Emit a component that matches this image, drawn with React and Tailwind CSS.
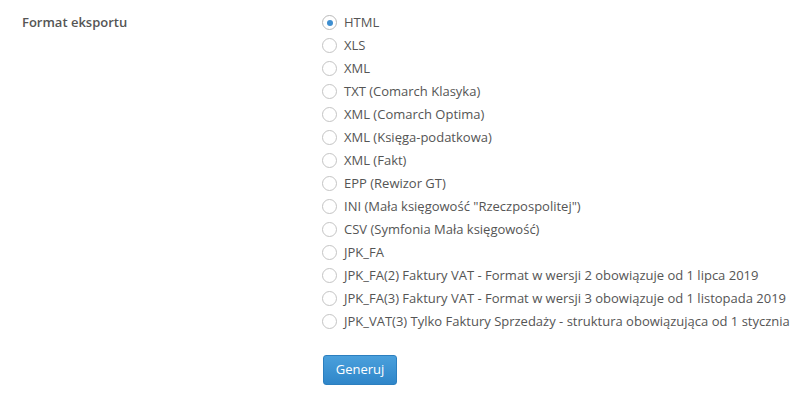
import React, { useState } from 'react'

const formats = [
  'HTML',
  'XLS',
  'XML',
  'TXT (Comarch Klasyka)',
  'XML (Comarch Optima)',
  'XML (Księga-podatkowa)',
  'XML (Fakt)',
  'EPP (Rewizor GT)',
  'INI (Mała księgowość "Rzeczpospolitej")',
  'CSV (Symfonia Mała księgowość)',
  'JPK_FA',
  'JPK_FA(2) Faktury VAT - Format w wersji 2 obowiązuje od 1 lipca 2019',
  'JPK_FA(3) Faktury VAT - Format w wersji 3 obowiązuje od 1 listopada 2019',
  'JPK_VAT(3) Tylko Faktury Sprzedaży - struktura obowiązująca od 1 stycznia 2020',
]

export default function App() {
  const [selected, setSelected] = useState(0)

  return (
    <div
      className="w-[792px] h-[396px] overflow-hidden bg-white text-[13px] text-[#555]"
      style={{ fontFamily: '"Open Sans", sans-serif' }}
    >
      <div className="flex pt-[11px]">
        {/* Label */}
        <div className="w-[322px] shrink-0 pl-[22px] leading-[23px] font-semibold text-[#555]">
          Format eksportu
        </div>

        {/* Options */}
        <div className="flex-1 min-w-0">
          {formats.map((label, i) => (
            <label
              key={label}
              className="flex items-center h-[23px] whitespace-nowrap cursor-pointer"
              onClick={() => setSelected(i)}
            >
              <span
                className={`w-[15px] h-[15px] rounded-full border shrink-0 flex items-center justify-center bg-white ${
                  selected === i ? 'border-[#b9b9b9]' : 'border-[#c4c4c4]'
                }`}
              >
                {selected === i && (
                  <span className="w-[6px] h-[6px] rounded-full bg-[#3e8ed0]" />
                )}
              </span>
              <span className="ml-[7px]">{label}</span>
            </label>
          ))}

          <button className="mt-[22px] ml-[1px] w-[74px] h-[30px] rounded-[3px] bg-gradient-to-b from-[#4aa0dc] to-[#2f86c9] border border-[#2c7fbf] text-white text-[13px]">
            Generuj
          </button>
        </div>
      </div>
    </div>
  )
}
